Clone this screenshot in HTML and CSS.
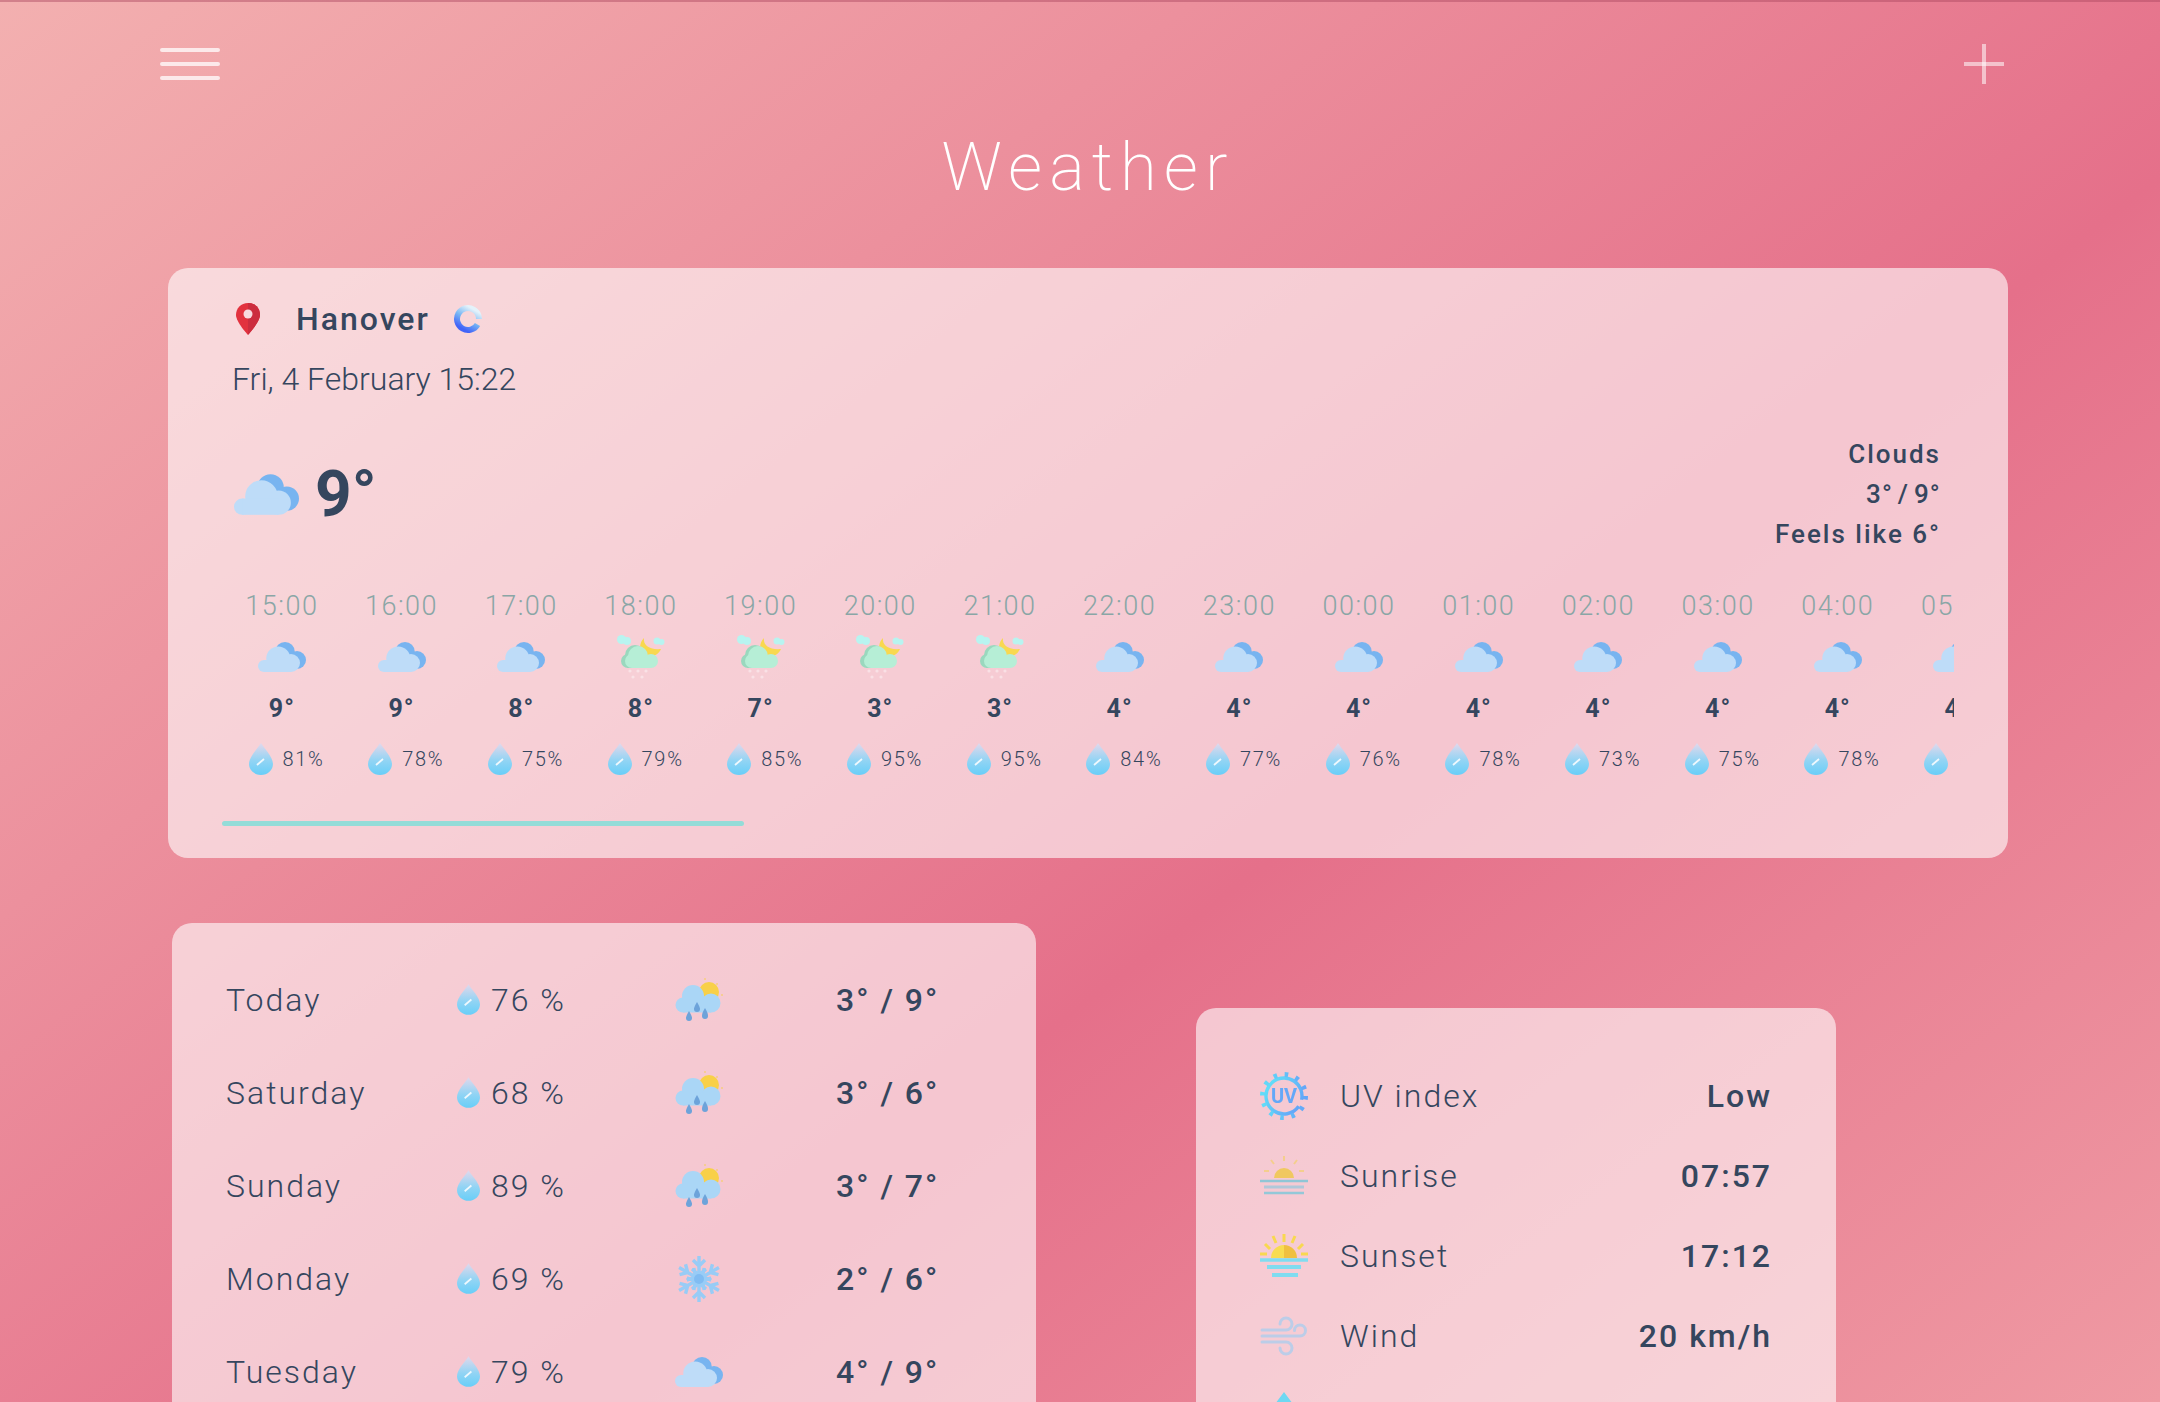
FILE: index.html
```html
<!DOCTYPE html>
<html lang="en">
<head>
<meta charset="utf-8">
<title>Weather</title>
<link rel="stylesheet" href="styles.css">
</head>
<body>
<svg class="defs" aria-hidden="true">
  <defs>
    <linearGradient id="dropFill" x1="0" y1="0" x2="0" y2="1"><stop offset="0" stop-color="#e2d8ec"/><stop offset=".55" stop-color="#92d4f4"/><stop offset="1" stop-color="#68cef8"/></linearGradient>
    <linearGradient id="spinFill" x1="0" y1="0" x2="0" y2="1"><stop offset="0" stop-color="#e4f2fa"/><stop offset=".5" stop-color="#78b8f4"/><stop offset="1" stop-color="#4264f8"/></linearGradient>
    <linearGradient id="uvFill" x1="0" y1="0" x2="1" y2="0"><stop offset="0" stop-color="#62dcf8"/><stop offset="1" stop-color="#64a6f8"/></linearGradient>
    <symbol id="cloud" viewBox="0 0 64 40">
      <g fill="#78b4f0"><circle cx="36" cy="13" r="13"/><circle cx="52" cy="24" r="12"/><rect x="30" y="14" width="22" height="22"/></g>
      <g fill="#bedcf8"><circle cx="8" cy="32" r="8"/><circle cx="27" cy="22" r="16"/><circle cx="44" cy="28" r="12"/><rect x="8" y="24" width="36" height="16"/></g>
    </symbol>
    <symbol id="moonsnow" viewBox="0 -2 48 48">
      <path fill="#f8d850" d="M27 3C26 10 32 15 44 14C40 23 29 24 24 16C22 11 24 6 27 3Z"/>
      <g fill="#b8f4f0"><circle cx="4.500" cy="4.500" r="4.500"/><circle cx="10" cy="6" r="4"/><circle cx="40" cy="6" r="3.500"/><circle cx="44.500" cy="7" r="3"/></g>
      <g fill="#9ad8be"><circle cx="11" cy="26" r="7"/><circle cx="18" cy="20" r="10"/><rect x="10" y="25" width="20" height="8"/></g>
      <g fill="#b6eed6"><circle cx="15" cy="26" r="7"/><circle cx="21" cy="21" r="10"/><circle cx="34" cy="26" r="7"/><rect x="15" y="24" width="19" height="9"/></g>
      <g fill="#fff" opacity=".4"><circle cx="13" cy="36" r="1.600"/><circle cx="21" cy="36" r="1.600"/><circle cx="29" cy="36" r="1.600"/><circle cx="16" cy="42" r="1.600"/><circle cx="25" cy="42" r="1.600"/></g>
    </symbol>
    <symbol id="rainsun" viewBox="0 -2 48 48">
      <circle cx="34" cy="14" r="10" fill="#f8d048"/>
      <g fill="#f8d048" opacity=".6"><circle cx="30" cy="1" r="1"/><circle cx="42" cy="6" r="1"/><circle cx="47" cy="17" r="1"/></g>
      <g fill="#aad6f6"><circle cx="8" cy="27" r="7.500"/><circle cx="18" cy="18" r="11"/><circle cx="36" cy="25" r="9.500"/><rect x="8" y="22" width="28" height="12.500"/></g>
      <g fill="#6da3da"><path d="M22 24c-2.500 4-3 6-3 7a3 3 0 0 0 6 0c0-1-.5-3-3-7z"/><path d="M14 33c-2.500 4-3 6-3 7a3 3 0 0 0 6 0c0-1-.5-3-3-7z"/><path d="M30 30c-2.500 4-3 6-3 8a3 3 0 0 0 6 0c0-2-.5-4-3-8z"/></g>
    </symbol>
    <symbol id="flake" viewBox="0 0 48 48">
      <g fill="none" stroke="#98ccf6" stroke-width="3.400">
        <g><path d="M24 1V47M18 5l6 6 6-6M18 43l6-6 6 6M17 14l7 6 7-6M17 34l7-6 7 6"/></g>
        <g transform="rotate(60 24 24)"><path d="M24 1V47M18 5l6 6 6-6M18 43l6-6 6 6M17 14l7 6 7-6M17 34l7-6 7 6"/></g>
        <g transform="rotate(120 24 24)"><path d="M24 1V47M18 5l6 6 6-6M18 43l6-6 6 6M17 14l7 6 7-6M17 34l7-6 7 6"/></g>
      </g>
      <circle cx="24" cy="24" r="5" fill="#80bcf2"/>
    </symbol>
    <symbol id="drop" viewBox="0 0 24 32">
      <path fill="url(#dropFill)" d="M12 0C9 5 0 14 0 21a12 11 0 0 0 24 0C24 14 15 5 12 0Z"/>
      <path stroke="#fff" stroke-width="1.800" opacity=".85" d="M8 22l7-6"/>
    </symbol>
    <symbol id="pin" viewBox="0 0 24 32">
      <path fill="#e2323e" d="M12 0C5 0 0 5 0 12C0 19 12 32 12 32S24 19 24 12C24 5 19 0 12 0Z"/>
      <path fill="#cc2d3e" d="M12 0V32S24 19 24 12C24 5 19 0 12 0Z"/>
      <circle cx="12" cy="11" r="4.500" fill="#f8dade"/>
    </symbol>
    <symbol id="spin" viewBox="0 0 30 30">
      <circle cx="15" cy="15" r="11" fill="none" stroke="url(#spinFill)" stroke-width="6" stroke-dasharray="63 6.200" transform="rotate(30 15 15)"/>
    </symbol>
    <symbol id="uv" viewBox="0 0 48 48">
      <circle cx="24" cy="24" r="18" fill="none" stroke="url(#uvFill)" stroke-width="3.400" stroke-dasharray="105.200 7.900" transform="rotate(35 24 24)"/>
      <circle cx="24" cy="24" r="21.500" fill="none" stroke="url(#uvFill)" stroke-width="5" stroke-dasharray="3.600 7.660"/>
      <text class="uv-glyphs" x="24" y="31" text-anchor="middle">UV</text>
    </symbol>
    <symbol id="sunrise" viewBox="0 0 48 40">
      <path fill="#f0c860" d="M14 22a10 10 0 0 1 20 0z"/>
      <path stroke="#f4d070" stroke-width="2" opacity=".7" d="M24 0v5M11 4l3 4M37 4l-3 4M4 15h5M39 15h5"/>
      <path stroke="#90c6d6" stroke-width="2.500" d="M0 25H48"/>
      <path stroke="#b0c8da" stroke-width="3" d="M4 31H44"/>
      <path stroke="#94c8d8" stroke-width="2.500" d="M4 37H44"/>
    </symbol>
    <symbol id="sunset" viewBox="0 0 48 44">
      <path fill="#f8dc50" d="M11 24a13 13 0 0 1 13-13V24z"/>
      <path fill="#f0c040" d="M37 24a13 13 0 0 0-13-13V24z"/>
      <path stroke="#f8d850" stroke-width="3" d="M24 0v8M13 2l3 7M35 2l-3 7M5 10l5 5M43 10l-5 5M0 20h7M41 20h7"/>
      <path stroke="#80dcf0" stroke-width="3.500" d="M0 26H48"/>
      <path stroke="#80dcf0" stroke-width="4" d="M7 33H41"/>
      <path stroke="#80dcf0" stroke-width="4" d="M12 41H38"/>
    </symbol>
    <symbol id="wind" viewBox="0 0 48 40">
      <g fill="none" stroke="#bccde8" stroke-width="3" stroke-linecap="round"><path d="M2 14H26a6 6 0 1 0-6-6"/><path d="M2 20H40a5.500 5.500 0 1 0-5.500-5.500"/><path d="M2 26H26a6 6 0 1 1-6 6"/></g>
    </symbol>
    <symbol id="pressure" viewBox="0 0 48 48">
      <path fill="#6fd8f2" d="M24 0L36 16C40 22 40 26 38 30A15 15 0 0 1 10 30C8 26 8 22 12 16Z"/>
    </symbol>
  </defs>
</svg>

<main class="page">
  <header class="topbar">
    <div class="burger"><span></span><span></span><span></span></div>
    <div class="plus"></div>
  </header>
  <h1 class="title">Weather</h1>

  <section class="card now">
    <div class="head">
      <div class="place">
        <svg class="pin"><use href="#pin"/></svg>
        <span class="city">Hanover</span>
        <svg class="spin"><use href="#spin"/></svg>
      </div>
      <div class="date">Fri, 4 February 15:22</div>
      <div class="current">
        <div class="temp-now">
          <svg class="cloud-big"><use href="#cloud"/></svg>
          <span class="temp-big">9°</span>
        </div>
        <div class="summary">
          <div>Clouds</div>
          <div class="range">3° / 9°</div>
          <div>Feels like 6°</div>
        </div>
      </div>
    </div>
    <div class="hours">
      <div class="hour"><div class="h-time">15:00</div><div class="h-icon"><svg class="ic-cloud"><use href="#cloud"/></svg></div><div class="h-temp">9°</div><div class="h-rain"><svg class="ic-drop"><use href="#drop"/></svg><span>81%</span></div></div>
      <div class="hour"><div class="h-time">16:00</div><div class="h-icon"><svg class="ic-cloud"><use href="#cloud"/></svg></div><div class="h-temp">9°</div><div class="h-rain"><svg class="ic-drop"><use href="#drop"/></svg><span>78%</span></div></div>
      <div class="hour"><div class="h-time">17:00</div><div class="h-icon"><svg class="ic-cloud"><use href="#cloud"/></svg></div><div class="h-temp">8°</div><div class="h-rain"><svg class="ic-drop"><use href="#drop"/></svg><span>75%</span></div></div>
      <div class="hour"><div class="h-time">18:00</div><div class="h-icon"><svg class="ic-48"><use href="#moonsnow"/></svg></div><div class="h-temp">8°</div><div class="h-rain"><svg class="ic-drop"><use href="#drop"/></svg><span>79%</span></div></div>
      <div class="hour"><div class="h-time">19:00</div><div class="h-icon"><svg class="ic-48"><use href="#moonsnow"/></svg></div><div class="h-temp">7°</div><div class="h-rain"><svg class="ic-drop"><use href="#drop"/></svg><span>85%</span></div></div>
      <div class="hour"><div class="h-time">20:00</div><div class="h-icon"><svg class="ic-48"><use href="#moonsnow"/></svg></div><div class="h-temp">3°</div><div class="h-rain"><svg class="ic-drop"><use href="#drop"/></svg><span>95%</span></div></div>
      <div class="hour"><div class="h-time">21:00</div><div class="h-icon"><svg class="ic-48"><use href="#moonsnow"/></svg></div><div class="h-temp">3°</div><div class="h-rain"><svg class="ic-drop"><use href="#drop"/></svg><span>95%</span></div></div>
      <div class="hour"><div class="h-time">22:00</div><div class="h-icon"><svg class="ic-cloud"><use href="#cloud"/></svg></div><div class="h-temp">4°</div><div class="h-rain"><svg class="ic-drop"><use href="#drop"/></svg><span>84%</span></div></div>
      <div class="hour"><div class="h-time">23:00</div><div class="h-icon"><svg class="ic-cloud"><use href="#cloud"/></svg></div><div class="h-temp">4°</div><div class="h-rain"><svg class="ic-drop"><use href="#drop"/></svg><span>77%</span></div></div>
      <div class="hour"><div class="h-time">00:00</div><div class="h-icon"><svg class="ic-cloud"><use href="#cloud"/></svg></div><div class="h-temp">4°</div><div class="h-rain"><svg class="ic-drop"><use href="#drop"/></svg><span>76%</span></div></div>
      <div class="hour"><div class="h-time">01:00</div><div class="h-icon"><svg class="ic-cloud"><use href="#cloud"/></svg></div><div class="h-temp">4°</div><div class="h-rain"><svg class="ic-drop"><use href="#drop"/></svg><span>78%</span></div></div>
      <div class="hour"><div class="h-time">02:00</div><div class="h-icon"><svg class="ic-cloud"><use href="#cloud"/></svg></div><div class="h-temp">4°</div><div class="h-rain"><svg class="ic-drop"><use href="#drop"/></svg><span>73%</span></div></div>
      <div class="hour"><div class="h-time">03:00</div><div class="h-icon"><svg class="ic-cloud"><use href="#cloud"/></svg></div><div class="h-temp">4°</div><div class="h-rain"><svg class="ic-drop"><use href="#drop"/></svg><span>75%</span></div></div>
      <div class="hour"><div class="h-time">04:00</div><div class="h-icon"><svg class="ic-cloud"><use href="#cloud"/></svg></div><div class="h-temp">4°</div><div class="h-rain"><svg class="ic-drop"><use href="#drop"/></svg><span>78%</span></div></div>
      <div class="hour"><div class="h-time">05:00</div><div class="h-icon"><svg class="ic-cloud"><use href="#cloud"/></svg></div><div class="h-temp">4°</div><div class="h-rain"><svg class="ic-drop"><use href="#drop"/></svg></div></div>
    </div>
    <div class="track"><div class="thumb"></div></div>
  </section>

  <div class="lower">
    <section class="card days">
      <div class="day"><span>Today</span><span class="d-rain"><svg class="ic-drop-d"><use href="#drop"/></svg>76 %</span><svg class="ic-48"><use href="#rainsun"/></svg><span class="strong">3° / 9°</span></div>
      <div class="day"><span>Saturday</span><span class="d-rain"><svg class="ic-drop-d"><use href="#drop"/></svg>68 %</span><svg class="ic-48"><use href="#rainsun"/></svg><span class="strong">3° / 6°</span></div>
      <div class="day"><span>Sunday</span><span class="d-rain"><svg class="ic-drop-d"><use href="#drop"/></svg>89 %</span><svg class="ic-48"><use href="#rainsun"/></svg><span class="strong">3° / 7°</span></div>
      <div class="day"><span>Monday</span><span class="d-rain"><svg class="ic-drop-d"><use href="#drop"/></svg>69 %</span><svg class="ic-48"><use href="#flake"/></svg><span class="strong">2° / 6°</span></div>
      <div class="day"><span>Tuesday</span><span class="d-rain"><svg class="ic-drop-d"><use href="#drop"/></svg>79 %</span><svg class="ic-cloud"><use href="#cloud"/></svg><span class="strong">4° / 9°</span></div>
    </section>

    <section class="card details">
      <div class="detail"><svg class="ic-48"><use href="#uv"/></svg><span class="d-label">UV index</span><span class="strong">Low</span></div>
      <div class="detail"><svg class="ic-sunrise"><use href="#sunrise"/></svg><span class="d-label">Sunrise</span><span class="strong">07:57</span></div>
      <div class="detail"><svg class="ic-sunset"><use href="#sunset"/></svg><span class="d-label">Sunset</span><span class="strong">17:12</span></div>
      <div class="detail"><svg class="ic-wind"><use href="#wind"/></svg><span class="d-label">Wind</span><span class="strong">20 km/h</span></div>
      <div class="detail"><svg class="ic-48"><use href="#pressure"/></svg></div>
    </section>
  </div>
</main>
</body>
</html>
```
FILE: styles.css
```css
* { box-sizing: border-box; }

html, body {
  margin: 0;
  height: 1402px;
  overflow: hidden;
}

body {
  background: linear-gradient(142.5deg, #f3b0b0 0%, #e5708a 60%, #ef9aa3 100%);
  color: #35465e;
  font-family: Roboto, "Liberation Sans", sans-serif;
  border-top: 2px solid rgba(170, 70, 95, .45);
}

.defs { position: absolute; width: 0; height: 0; }

svg { display: block; flex: none; filter: blur(.55px); }

.page { width: 2160px; margin-top: -2px; }

/* top bar */
.topbar {
  display: flex;
  justify-content: space-between;
  align-items: flex-start;
  height: 100px;
  padding: 44px 156px 0 160px;
}

.burger {
  display: flex;
  flex-direction: column;
  gap: 10px;
  width: 60px;
  margin-top: 4px;
}

.burger span {
  height: 4px;
  border-radius: 2px;
  background: rgba(255, 255, 255, .75);
}

.plus {
  position: relative;
  width: 40px;
  height: 40px;
}

.plus::before, .plus::after {
  content: "";
  position: absolute;
  background: rgba(255, 255, 255, .55);
}

.plus::before { left: 0; right: 0; top: 18px; height: 4px; }
.plus::after { top: 0; bottom: 0; left: 18px; width: 4px; }

.title {
  width: 1840px;
  margin: 27px 0 61px 168px;
  font-size: 67px;
  font-weight: 200;
  line-height: 80px;
  letter-spacing: 7px;
  text-align: center;
  color: #fff;
}

/* cards */
.card {
  background: rgba(255, 255, 255, .6);
  border-radius: 20px;
}

.now {
  width: 1840px;
  height: 590px;
  margin-left: 168px;
  padding: 35px 54px 0;
}

.head { padding-left: 10px; }

.place {
  display: flex;
  align-items: center;
  height: 32px;
}

.pin { width: 24px; height: 32px; margin-left: 4px; }

.city {
  margin-left: 36px;
  font-size: 32px;
  font-weight: 500;
  letter-spacing: 2px;
}

.spin { width: 30px; height: 30px; margin-left: 23px; }

.date {
  margin-top: 24px;
  font-size: 32px;
  font-weight: 300;
  line-height: 40px;
}

.current {
  display: flex;
  justify-content: space-between;
  align-items: center;
  margin-top: 35px;
}

.temp-now {
  display: flex;
  align-items: center;
}

.cloud-big { width: 65px; height: 41px; margin-left: 2px; }

.temp-big {
  margin: 2px 0 0 16px;
  font-size: 64px;
  font-weight: 700;
  line-height: 72px;
}

.summary {
  padding-right: 13px;
  font-size: 26px;
  font-weight: 500;
  line-height: 40px;
  letter-spacing: 2px;
  text-align: right;
}

.range { letter-spacing: 1.200px; word-spacing: -3px; }

/* hourly strip */
.hours {
  display: flex;
  overflow: hidden;
  margin-top: 36px;
}

.hour {
  flex: none;
  width: 119.700px;
  display: flex;
  flex-direction: column;
  align-items: center;
}

.h-time {
  font-size: 27px;
  font-weight: 300;
  line-height: 32px;
  letter-spacing: 1.500px;
  color: #8aa6a6;
}

.h-icon {
  display: flex;
  align-items: center;
  justify-content: center;
  width: 48px;
  height: 48px;
  margin-top: 11px;
}

.h-temp {
  margin-top: 12px;
  font-size: 25px;
  font-weight: 700;
  line-height: 32px;
  letter-spacing: 1px;
}

.h-rain {
  display: flex;
  align-items: center;
  gap: 10px;
  align-self: flex-start;
  height: 32px;
  margin-top: 18px;
  padding-left: 26.500px;
  font-size: 20px;
  font-weight: 300;
  letter-spacing: 1.700px;
}

.ic-cloud { width: 48px; height: 30px; }
.ic-48 { width: 48px; height: 48px; }
.ic-drop { width: 24px; height: 32px; }
.ic-drop-d { width: 23px; height: 31px; }
.ic-sunrise { width: 48px; height: 40px; }
.ic-sunset { width: 48px; height: 44px; }
.ic-wind { width: 48px; height: 40px; }

.track { margin-top: 46px; }

.thumb {
  width: 522px;
  height: 5px;
  border-radius: 3px;
  background: #94dcd8;
}

/* lower cards */
.lower {
  display: flex;
  align-items: flex-start;
  gap: 160px;
  margin: 65px 0 0 172px;
}

.days {
  width: 864px;
  height: 600px;
  padding: 30px 0 0 54px;
}

.day {
  display: grid;
  grid-template-columns: 231px 218px 161px 1fr;
  align-items: center;
  height: 93px;
  font-size: 32px;
  font-weight: 300;
  letter-spacing: 2px;
}

.d-rain {
  display: flex;
  align-items: center;
  gap: 11px;
}

.strong { font-weight: 500; }

.details {
  width: 640px;
  height: 500px;
  margin-top: 85px;
  padding: 48px 64px 0 64px;
}

.detail {
  display: flex;
  align-items: center;
  height: 80px;
  font-size: 32px;
  font-weight: 300;
  letter-spacing: 2px;
}

.d-label {
  flex: 1;
  margin-left: 32px;
}

.uv-glyphs {
  font-family: Roboto, sans-serif;
  font-size: 20px;
  font-weight: 700;
  letter-spacing: 0;
  fill: #64a8f8;
}
```
